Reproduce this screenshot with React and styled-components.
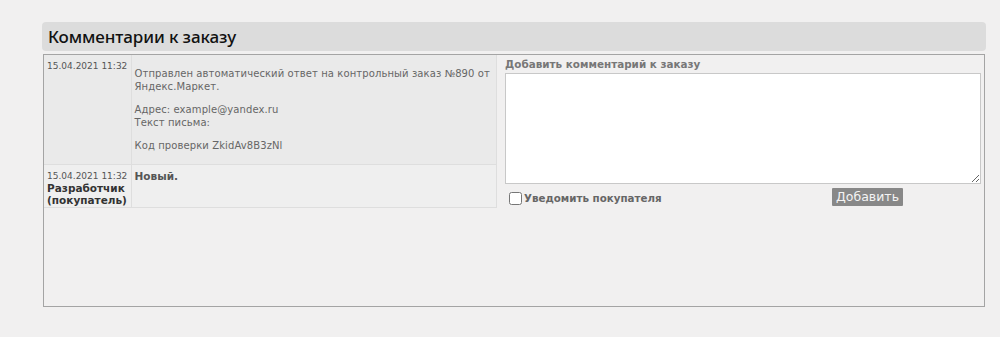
import React, { useState } from "react";
import styled, { createGlobalStyle } from "styled-components";

const Global = createGlobalStyle`
  html, body {
    margin: 0;
    background: #f1f0f0;
  }
  body {
    font-family: "DejaVu Sans", Verdana, sans-serif;
  }
`;

const Page = styled.div`
  padding: 22px 14px 0 42px;
  height: 337px;
  box-sizing: border-box;
`;

const Header = styled.div`
  height: 29px;
  background: #dcdcdc;
  border-radius: 4px;
  display: flex;
  align-items: center;
  padding-left: 6px;
`;

const Title = styled.h2`
  margin: 0;
  font-family: "Noto Sans", "Open Sans", sans-serif;
  font-weight: 500;
  font-size: 17px;
  color: #111;
  letter-spacing: -0.1px;
`;

const Box = styled.div`
  margin: 3px 1px 0 1px;
  height: 253px;
  box-sizing: border-box;
  border: 1px solid #a4a4a4;
  display: flex;
  gap: 8px;
`;

const Table = styled.table`
  width: 453px;
  table-layout: fixed;
  border-collapse: collapse;
  align-self: flex-start;
  font-size: 10px;
`;

const Row = styled.tr`
  background: ${(p) => p.bg};
`;

const DateCell = styled.td`
  width: 87px;
  box-sizing: border-box;
  vertical-align: top;
  padding: 5px 2px 1px 3px;
  border: 1px solid #dedede;
  border-left: none;
  border-top: none;
  font-size: 9px;
  color: #555;
  line-height: 12px;
  white-space: nowrap;
`;

const Author = styled.div`
  font-size: 10.5px;
  font-weight: bold;
  color: #333;
  line-height: 12px;
`;

const TextCell = styled.td`
  vertical-align: top;
  padding: 2px 3px 2px 3px;
  border: 1px solid #dedede;
  border-top: none;
  color: #666;
  line-height: 13px;
  letter-spacing: 0.1px;
`;

const Para = styled.p`
  margin: 10px 0;
`;

const Status = styled.div`
  padding-top: 3px;
  font-weight: bold;
  font-size: 10.5px;
  color: #555;
  letter-spacing: 0;
`;

const Form = styled.div`
  flex: 1;
  padding: 3px 3px 0 0;
  display: flex;
  flex-direction: column;
`;

const Label = styled.label`
  font-size: 10.4px;
  font-weight: bold;
  color: #777;
  line-height: 13px;
  margin-bottom: 2px;
`;

const Area = styled.textarea`
  width: 476px;
  height: 111px;
  box-sizing: border-box;
  border: 1px solid #c8c8c8;
  background: #fff;
  resize: both;
  margin: 0;
  outline: none;
`;

const Controls = styled.div`
  display: flex;
  align-items: center;
  justify-content: space-between;
  width: 398px;
  margin-top: 4px;
`;

const Check = styled.label`
  display: flex;
  align-items: center;
  font-size: 10.3px;
  font-weight: bold;
  color: #666;
  padding-top: 2px;

  input {
    margin: 0 2px 0 4px;
    width: 13px;
    height: 13px;
  }
`;

const Button = styled.button`
  background: #888;
  color: #f4f4f4;
  border: none;
  border-radius: 1px;
  font-family: "DejaVu Sans", Verdana, sans-serif;
  font-size: 12.5px;
  padding: 1px 4px;
  height: 18px;
  line-height: 16px;
  cursor: pointer;
`;

export default function App() {
  let [text, setText] = useState("");
  let [notify, setNotify] = useState(false);

  return (
    <Page>
      <Global />
      <Header>
        <Title>Комментарии к заказу</Title>
      </Header>
      <Box>
        <Table>
          <tbody>
            <Row bg="#eaeaea">
              <DateCell>15.04.2021 11:32</DateCell>
              <TextCell>
                <Para>
                  Отправлен автоматический ответ на контрольный заказ №890 от
                  Яндекс.Маркет.
                </Para>
                <Para>
                  Адрес: example@yandex.ru
                  <br />
                  Текст письма:
                </Para>
                <Para>Код проверки ZkidAv8B3zNl</Para>
              </TextCell>
            </Row>
            <Row bg="#efefef">
              <DateCell>
                15.04.2021 11:32
                <Author>Разработчик</Author>
                <Author>(покупатель)</Author>
              </DateCell>
              <TextCell>
                <Status>Новый.</Status>
              </TextCell>
            </Row>
          </tbody>
        </Table>
        <Form>
          <Label>Добавить комментарий к заказу</Label>
          <Area value={text} onChange={(e) => setText(e.target.value)} />
          <Controls>
            <Check>
              <input
                type="checkbox"
                checked={notify}
                onChange={(e) => setNotify(e.target.checked)}
              />
              Уведомить покупателя
            </Check>
            <Button>Добавить</Button>
          </Controls>
        </Form>
      </Box>
    </Page>
  );
}
